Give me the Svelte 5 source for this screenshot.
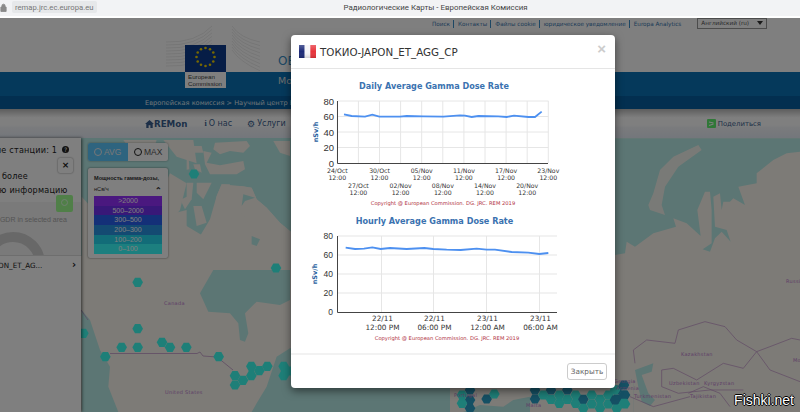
<script lang="ts">
	const daily = [[162,133],[185,138],[225,140],[247,134],[268,140],[330,140],[350,138],[400,139],[460,140],[510,136],[525,137],[545,141],[565,138],[625,139],[650,141],[672,137],[715,141],[735,141],[755,125]];
	const hourly = [[167,128],[195,132],[222,131],[247,127],[272,132],[300,129],[350,132],[403,129],[430,132],[470,134],[512,135],[560,131],[590,134],[615,134],[665,141],[715,143],[748,147],[775,144]];
	const dailyLine = daily.map(([x, y]) => `${290 + x / 3},${70 + y / 3}`).join(' ');
	const hourlyLine = hourly.map(([x, y]) => `${290 + x / 3},${205 + y / 3}`).join(' ');

	const dailyTicks = ['24/Oct','27/Oct','30/Oct','02/Nov','05/Nov','08/Nov','11/Nov','14/Nov','17/Nov','20/Nov','23/Nov'];
	const hourlyTicks = [
		{ x: 381.5, day: '22/11', time: '12:00 PM' },
		{ x: 433.5, day: '22/11', time: '06:00 PM' },
		{ x: 486.5, day: '23/11', time: '12:00 AM' },
		{ x: 539.5, day: '23/11', time: '06:00 AM' }
	];

	const legend = [
		{ label: '>2000', color: '#9430ff' },
		{ label: '500–2000', color: '#7030f0' },
		{ label: '300–500', color: '#2860f0' },
		{ label: '200–300', color: '#2894e4' },
		{ label: '100–200', color: '#24d8f0' },
		{ label: '0–100', color: '#38ffff' }
	];

	const hexNorth = [[194,174],[276,268]];
	const hexCanada = [[413,37],[413,176],[250,190],[365,232],[413,232],[486,217],[510,232],[559,232],[316,260],[656,260],[754,289],[802,289],[778,302],[754,317],[729,331],[705,317],[705,345],[851,289],[851,317],[870,303]];
	const hexEurope = [[516,45,0],[540,30,1],[540,60,1],[516,70,0],[540,85,1],[590,57,1],[613,42,0],[735,30,1],[735,57,1],[760,45,0],[783,30,1],[808,45,0],[832,30,1],[857,45,0],[783,58,0],[808,70,0],[832,58,0],[857,70,0],[880,58,1],[905,45,0],[930,58,0],[955,45,0],[980,30,1],[1005,45,1],[905,72,0],[955,72,0],[1005,72,0],[980,58,1],[880,85,0],[930,85,0],[980,85,0]];
	const hexAsia = [[42,765,1],[15,780,0],[42,795,1],[15,810,1],[42,820,0]];

	const hexes = [
		...hexNorth.map(([x, y]) => ({ x, y, blue: false })),
		...hexCanada.map(([x, y]) => ({ x: x / 3, y: 270 + y / 3, blue: false })),
		...hexEurope.map(([x, y, b]) => ({ x: 290 + x / 3, y: 380 + y / 3, blue: !!b })),
		...hexAsia.map(([x, y, b]) => ({ x: 610 + x / 3, y: 130 + y / 3, blue: !!b }))
	];

	const stars = Array.from({ length: 12 }, (_, i) => {
		const a = (i * Math.PI) / 6;
		return { x: 205.5 + 9 * Math.sin(a), y: 57 - 9 * Math.cos(a) };
	});
</script>

<div class="chrome">
	<svg class="lock" viewBox="0 0 8 10" width="7" height="9"><path d="M1 4.500h6v5H1zM2.200 4.500V3a1.800 1.800 0 0 1 3.600 0v1.500" fill="#8a8a8a" stroke="#8a8a8a" /></svg>
	<span class="url">remap.jrc.ec.europa.eu</span>
	<span class="tab-title">Радиологические Карты - Европейская Комиссия</span>
</div>

<div class="page">
	<div class="top-links">
		<a href="#a">Поиск</a>
		<a href="#a">Контакты</a>
		<a href="#a">Файлы cookie</a>
		<a href="#a">юридическое уведомление</a>
		<a class="last" href="#a">Europa Analytics</a>
		<div class="lang">Английский (ru)<i></i></div>
	</div>

	<div class="hero">
		<div class="hero-title">ОБ</div>
		<div class="hero-band"><span>Мо</span></div>
		<div class="crumbs">Европейская комиссия &gt; Научный центр ЕС</div>
	</div>

	<svg class="logo" viewBox="160 20 100 75" width="100" height="75">
		<g fill="none" stroke="#e4e4e4" stroke-width="0.7">
			{#each [0, 3, 6, 9, 12, 15, 18, 21, 24] as d}
				<path d="M166 {42 + d}q30 1 46 -{16 - d * 0.15}" />
				<path d="M232 {26 + d}q8 12 28 {16 + d * 0.2}" />
			{/each}
		</g>
		<rect x="185" y="45" width="41" height="27" fill="#0c3a8c" />
		{#each stars as s}
			<circle cx={s.x} cy={s.y} r="1.300" fill="#f0d000" />
		{/each}
		<rect x="185" y="72" width="41" height="16" fill="#fff" />
		<text x="188" y="79" class="logo-text">European</text>
		<text x="188" y="85.500" class="logo-text">Commission</text>
	</svg>

	<nav class="nav-bar">
		<a class="brand" href="#a">
			<svg viewBox="0 0 10 9" width="9" height="8"><path d="M5 0 10 4.500H8.600V9H6V6H4v3H1.400V4.500H0z" fill="#3a5f90" /></svg>
			REMon
		</a>
		<a href="#a"><b class="info">i</b> О нас</a>
		<a href="#a"><span class="gear">⚙</span> Услуги</a>
		<a class="share" href="#a">
			<svg viewBox="0 0 9 9" width="9" height="9">
				<rect width="9" height="9" rx="1" fill="#60f070" />
				<path d="M2 6.500 6.500 5M2 3 6.500 4" stroke="#fff" stroke-width="1.200" />
			</svg>
			Поделиться
		</a>
	</nav>

	<div class="map-area">
		<svg class="map" viewBox="0 138 800 274" aria-label="Map">
			<rect x="0" y="138" width="800" height="274" fill="#faf6ee" />
			<g transform="translate(180 136) scale(.3333)">
				<path d="M-300 0H340V330L336 290 300 260 260 215 230 190 215 155 180 150 125 145 110 180 90 250 60 300 20 350-300 360z" fill="#b8ece8" />
				<g fill="#faf6ee">
					<path d="M105 20 200 15 210 30 190 50 150 45 120 55 100 40z" />
					<path d="M80 80 120 88 190 75 195 100 170 115 90 115 75 85 70 45 95 50z" />
					<path d="M0 40 25 45 28 100 0 105z" />
					<path d="M35 30 65 30 70 50 40 50z" />
					<path d="M40 85 60 85 65 110 45 100z" />
					<path d="M0 140 40 140 35 190 15 220 0 190z" />
					<path d="M50 140 95 140 70 190 50 170z" />
					<path d="M40 210 65 210 80 260 50 270z" />
					<path d="M280 15 330 15 330 60 300 50z" />
					<path d="M0 250 20 270 70 300 90 330 70 360 0 360z" />
					<path d="M125 145 150 145 135 190 150 245 200 260 215 300 190 330 160 360 130 320 120 300 95 270 100 240 110 180z" />
					<path d="M150 160 185 150 215 155 230 190 260 215 300 260 336 290 336 360 200 360 220 290 200 250 175 220 165 190z" />
				</g>
				<path d="M190 175 225 185 195 195 185 210z" fill="#b8ece8" />
				<path d="M215 300 240 310 230 330 215 325z" fill="#b8ece8" />
			</g>
			<g transform="translate(0 130) scale(.3333)">
				<path d="M245 30H560V200L530 215 540 290 500 310 440 270 380 300 300 270 245 290z" fill="#b8ece8" />
				<g fill="#faf6ee">
					<path d="M370 30 470 30 460 60 400 70z" />
					<path d="M490 30 580 30 590 100 530 80z" />
					<path d="M510 130 560 160 540 240 500 290 470 220z" />
					<path d="M245 200 420 390 245 390z" />
					<path d="M400 280 560 240 560 400 400 400z" />
				</g>
			</g>
			<g transform="translate(0 270) scale(.3333)" fill="#b8ece8">
				<path d="M640 0 600 70 625 125 690 130 715 160 720 210 735 215 745 190 735 130 770 95 840 105 870 90V0z" />
				<path d="M870 235 830 260 820 290 800 350 770 400 755 426H1300V235z" />
				<path d="M245 120 270 150 300 240 330 290 325 350 355 426H245z" />
			</g>
			<g transform="translate(290 380) scale(.3333)">
				<path d="M560 0H1030V100H0V0z" fill="#b8ece8" />
				<path d="M480 20H720V50L670 60 640 80 570 75 510 100H480z" fill="#faf6ee" />
				<path d="M720 0H1030V100H720z" fill="#faf6ee" />
			</g>
			<g transform="translate(610 130) scale(.3333)">
				<path d="M15 25H570V65L530 70 490 90 440 130 440 160 385 170 405 225 370 205 360 215 340 215 335 240 330 190 310 200 315 290 350 300 362 335 335 305 315 325 300 365 278 358 305 340 305 240 300 185 285 185 262 240 272 318 230 280 190 265 198 290 130 310 75 350 50 335 45 370 15 375z" fill="#b8ece8" />
				<path d="M265 45 275 60 205 110 165 170 155 225 165 255 120 240 115 225 130 190 150 120 190 80z" fill="#faf6ee" opacity=".9" />
				<path d="M75 720 130 700 125 725 95 735 115 790 135 810 120 828 95 815 85 770z" fill="#b8ece8" />
				<g fill="none" stroke="#c090c8" stroke-width="2">
					<path d="M70 660 110 630 195 640 205 600 285 575 345 590 380 630 440 665 400 715 340 700 260 750 190 715 155 720 155 770 205 790 300 780 400 780" />
					<path d="M440 665 480 650 545 625 570 630M440 665 480 720 570 755" />
					<path d="M70 660 75 700M235 790 280 770 330 790 360 830M60 800 130 830 240 800" />
				</g>
			</g>
			<path d="M110 353.500H197L200 352 203 356 217 357 233 370" fill="none" stroke="#c098c8" stroke-width=".8" />
			<path d="M81 310 88 320" fill="none" stroke="#c098c8" stroke-width=".8" />
			{#each hexes as h}
				<polygon
					transform="translate({h.x} {h.y})"
					points="-5.300,0 -2.650,-4.600 2.650,-4.600 5.300,0 2.650,4.600 -2.650,4.600"
					fill={h.blue ? '#2aa0c8' : '#3cfff0'}
				/>
			{/each}
			<g class="labels">
				<text x="164" y="305">Canada</text>
				<text x="165" y="394">United States</text>
				<text x="786" y="283">Russia</text>
				<text x="681" y="356">Kazakhstan</text>
				<text x="669" y="385">Uzbekistan</text>
				<text x="704" y="385">Kyrgyzstan</text>
				<text x="634" y="398">Turkmenistan</text>
				<text x="690" y="398">Tajikistan</text>
				<text x="793" y="362">Mo</text>
				<text x="614" y="383">Georgia</text>
				<text x="616" y="390">Armenia</text>
				<text x="454" y="397">Portugal</text>
				<text x="526" y="407">Malta</text>
			</g>
		</svg>

		<aside class="side">
			<div class="side-head">Выбранные станции: 1 <span class="help">?</span></div>
			<div class="side-close"><span>×</span></div>
			<p class="side-text">Получить более<br />подробную информацию</p>
			<div class="side-gray">
				<div class="side-note">Average GDR in selected area</div>
				<div class="donut"></div>
			</div>
			<span class="side-go"><i></i></span>
			<div class="station">ТОКИО-JAPON_ET_AG...<b>›</b></div>
		</aside>

		<div class="toggle">
			<span class="on"><i class="check"></i>AVG</span>
			<span><i class="ring"></i>MAX</span>
		</div>

		<div class="legend">
			<div class="legend-title">Мощность гамма-дозы,</div>
			<div class="legend-unit">нСв/ч <b>⌃</b></div>
			{#each legend as row}
				<div class="legend-row" style="background: {row.color}">{row.label}</div>
			{/each}
		</div>
	</div>

	<div class="backdrop"></div>

	<section class="modal">
		<header class="modal-head">
			<svg class="flag" viewBox="0 0 17 13" width="17" height="13">
				<defs>
					<linearGradient id="fl" x1="0" y1="0" x2="0" y2="1">
						<stop offset="0" stop-color="#fff" stop-opacity=".25" />
						<stop offset=".5" stop-color="#fff" stop-opacity="0" />
						<stop offset="1" stop-color="#000" stop-opacity=".15" />
					</linearGradient>
				</defs>
				<rect width="5.700" height="13" fill="#1c2a78" />
				<rect x="5.700" width="5.600" height="13" fill="#f4f4f8" />
				<rect x="11.300" width="5.700" height="13" fill="#e8343c" />
				<rect width="17" height="13" fill="url(#fl)" />
			</svg>
			<h2>ТОКИО-JAPON_ET_AGG_CP</h2>
			<span class="close">×</span>
		</header>

		<div class="modal-body">
			<svg class="chart" viewBox="291 78 324 128" width="324" height="128">
				<text class="chart-title" x="434" y="89">Daily Average Gamma Dose Rate</text>
				{#each [0, 1, 2, 3] as i}
					<line x1="338" x2="548.500" y1={101 + i * 15.5} y2={101 + i * 15.5} class="grid" />
				{/each}
				{#each dailyTicks as t, i}
					<line x1={337.3 + i * 21.1} x2={337.3 + i * 21.1} y1="101" y2="163" class="grid" />
					<text class="tick-sm" x={337.3 + i * 21.1} y={i % 2 ? 188 : 173}>{t}</text>
					<text class="tick-sm" x={337.3 + i * 21.1} y={i % 2 ? 195 : 180}>12:00</text>
				{/each}
				<path d="M337.500 101V163.500H548" class="axis" />
				{#each [80, 60, 40, 20, 0] as v, i}
					<text class="tick-y" x="334" y={104.500 + i * 15.5}>{v}</text>
				{/each}
				<text class="y-title" transform="translate(317.500 132) rotate(-90)">nSv/h</text>
				<polyline points={dailyLine} class="series" />
				<text class="copyright" x="443" y="205">Copyright @ European Commission. DG. JRC. REM 2019</text>
			</svg>

			<svg class="chart" viewBox="291 210 324 132" width="324" height="132">
				<text class="chart-title big" x="434.500" y="224">Hourly Average Gamma Dose Rate</text>
				{#each [0, 1, 2, 3] as i}
					<line x1="338" x2="557" y1={236 + i * 19} y2={236 + i * 19} class="grid thick" />
				{/each}
				{#each hourlyTicks as t}
					<line x1={t.x} x2={t.x} y1="236" y2="312" class="grid" />
					<text class="tick-md" x={t.x + 1} y="321">{t.day}</text>
					<text class="tick-md" x={t.x + 1} y="330">{t.time}</text>
				{/each}
				<path d="M337.500 236V312.500H557" class="axis" />
				{#each [80, 60, 40, 20, 0] as v, i}
					<text class="tick-y small" x="333" y={239 + i * 19}>{v}</text>
				{/each}
				<text class="y-title" transform="translate(316.500 274) rotate(-90)">nSv/h</text>
				<polyline points={hourlyLine} class="series" />
				<text class="copyright" x="447" y="340">Copyright @ European Commission. DG. JRC. REM 2019</text>
			</svg>
		</div>

		<footer class="modal-foot">
			<button type="button">Закрыть</button>
		</footer>
	</section>

	<div class="watermark">Fishki.net</div>
</div>

<style>
	:global(body) {
		margin: 0;
		background: #fff;
		overflow: hidden;
	}

	.chrome {
		display: flex;
		align-items: center;
		height: 16px;
		padding-bottom: 2px;
		background: linear-gradient(#f2f3f5 88%, #fff 88%);
		font-family: Roboto, sans-serif;
	}

	.lock {
		margin: 0 3px 2px 0;
	}

	.url {
		height: 12px;
		margin: -3px 0 0 2px;
		padding: 0 3px;
		background: #e6e8ea;
		border-radius: 2px;
		font-size: 7.700px;
		line-height: 13px;
		color: #777;
	}

	.tab-title {
		margin: -2px 0 0 247px;
		font-size: 7.900px;
		color: #444;
	}

	.page {
		position: relative;
		height: 394px;
		overflow: hidden;
		background: #fff;
		font-family: 'DejaVu Sans', sans-serif;
	}

	.top-links {
		display: flex;
		align-items: center;
		height: 54px;
		padding: 0 0 43px 432px;
		box-sizing: border-box;
		font-size: 5.700px;
	}

	.top-links a {
		padding-right: 3px;
		margin-right: 4px;
		border-right: 1px solid #3a8fc8;
		color: #3a78b0;
		text-decoration: none;
		line-height: 8px;
		white-space: nowrap;
	}

	.top-links a.last {
		border: 0;
		margin-right: 13px;
	}

	.lang {
		position: relative;
		width: 70px;
		height: 11px;
		box-sizing: border-box;
		padding-left: 3px;
		border: 1px solid #999;
		line-height: 9px;
		color: #555;
		white-space: nowrap;
	}

	.lang i {
		position: absolute;
		right: 3px;
		top: 2px;
		border: 3.500px solid transparent;
		border-top: 4px solid #333;
		border-bottom: 0;
	}

	.hero {
		position: relative;
		height: 37px;
		color: #fff;
	}

	.hero-title {
		position: absolute;
		left: 278px;
		top: -18px;
		font-size: 12px;
		color: #3a90c8;
		white-space: nowrap;
	}

	.hero-band {
		height: 24px;
		background: #0a72b6;
		font-size: 9.500px;
		line-height: 18px;
		padding-left: 278px;
		color: #ddd;
	}

	.crumbs {
		height: 13px;
		padding-left: 145px;
		background: #065ea0;
		font-size: 6.600px;
		line-height: 14px;
		color: #dfe8f0;
		white-space: nowrap;
	}

	.logo {
		position: absolute;
		left: 160px;
		top: 2px;
	}

	.logo-text {
		font: 6.200px 'Liberation Sans', sans-serif;
		fill: #444;
	}

	.nav-bar {
		display: flex;
		align-items: center;
		height: 29px;
		padding-left: 145px;
		box-sizing: border-box;
		background: linear-gradient(#bbb, #fff 30%, #fff 55%, #f4f6fa 65%, #e8eef8);
		font-size: 8px;
		color: #3a5f90;
	}

	.nav-bar a {
		display: flex;
		align-items: center;
		gap: 2px;
		margin-right: 15px;
		color: inherit;
		text-decoration: none;
		white-space: nowrap;
	}

	.brand {
		font-size: 8.700px;
		font-weight: bold;
		gap: 0 !important;
		margin-right: 17px !important;
	}

	.info {
		font-family: 'Liberation Serif', serif;
	}

	.gear {
		font-size: 9px;
	}

	.nav-bar .share {
		margin: 0 0 0 auto;
		padding-right: 39px;
		font-size: 6.900px;
	}

	.map-area {
		position: relative;
		height: 274px;
	}

	.map {
		display: block;
		width: 800px;
		height: 274px;
	}

	.labels text {
		font: 5px 'DejaVu Sans', sans-serif;
		letter-spacing: 0.3px;
		fill: #c080d0;
	}

	.side {
		position: absolute;
		left: -139px;
		top: 0;
		width: 220px;
		height: 274px;
		background: #fff;
		box-shadow: 1px 0 3px rgba(0, 0, 0, 0.6);
		color: #222;
		overflow: hidden;
	}

	.side-head {
		padding: 7px 12px 0 0;
		height: 16px;
		font-size: 8.100px;
		letter-spacing: 0.2px;
		text-align: right;
		white-space: nowrap;
	}

	.help {
		display: inline-block;
		width: 7px;
		height: 7px;
		margin-left: 2px;
		border-radius: 50%;
		background: #222;
		color: #fff;
		font-size: 6px;
		line-height: 7px;
		text-align: center;
		vertical-align: 1px;
		letter-spacing: 0;
	}

	.side-close {
		position: absolute;
		left: 197px;
		top: 20px;
		width: 15px;
		height: 15px;
		background: #fff;
		box-shadow: 0 0 2px rgba(0, 0, 0, 0.5);
		border-radius: 2px;
		text-align: center;
		font-size: 9px;
		font-weight: bold;
		line-height: 14px;
	}

	.side-text {
		margin: 9px 0 0 96px;
		font-size: 8.100px;
		line-height: 13.600px;
		letter-spacing: 0.2px;
		white-space: nowrap;
	}

	.side-go {
		position: absolute;
		left: 195px;
		top: 57px;
		width: 17px;
		height: 17px;
		border-radius: 2px;
		background: #a0ff90;
	}

	.side-go i {
		display: block;
		width: 5px;
		height: 5px;
		margin: 4px auto;
		border: 1.500px solid #e0ffe0;
		border-radius: 50%;
	}

	.side-gray {
		position: absolute;
		left: 0;
		right: 0;
		top: 64px;
		height: 53px;
		background: #f4f4f4;
		overflow: hidden;
	}

	.side-note {
		margin: 14px 0 0 111px;
		font-size: 7px;
		color: #aaa;
		font-family: 'Liberation Sans', sans-serif;
		white-space: nowrap;
	}

	.donut {
		position: absolute;
		left: 120px;
		top: 30px;
		width: 64px;
		height: 64px;
		box-sizing: border-box;
		border: 10px solid #d0d0d0;
		border-radius: 50%;
	}

	.station {
		position: absolute;
		left: 0;
		right: 0;
		top: 117px;
		height: 20px;
		padding-left: 97px;
		background: #fff;
		border-top: 1px solid #ddd;
		box-sizing: border-box;
		font-size: 7.200px;
		line-height: 19px;
		white-space: nowrap;
	}

	.station b {
		position: absolute;
		left: 211px;
		top: -1px;
		font-size: 10px;
	}

	.toggle {
		position: absolute;
		left: 88px;
		top: 5px;
		display: flex;
		height: 18px;
		font-size: 8.500px;
		line-height: 18px;
		color: #555;
		font-family: 'Liberation Sans', sans-serif;
		box-shadow: 0 0 2px rgba(0, 0, 0, 0.4);
		border-radius: 2px;
		background: #fff;
	}

	.toggle span {
		display: flex;
		align-items: center;
		gap: 2px;
		width: 40px;
		padding-left: 6px;
		box-sizing: border-box;
	}

	.toggle .on {
		background: #5cc8ff;
		color: #eee;
		border-radius: 2px 0 0 2px;
	}

	.check,
	.ring {
		display: block;
		width: 6px;
		height: 6px;
		border: 1.500px solid #eee;
		border-radius: 50%;
	}

	.ring {
		border-color: #222;
	}

	.legend {
		position: absolute;
		left: 88px;
		top: 30px;
		width: 80px;
		height: 90px;
		padding: 6px 6px 0;
		box-sizing: border-box;
		background: #fff;
		border-radius: 2px;
		box-shadow: 0 0 2px rgba(0, 0, 0, 0.6);
		font-family: 'Liberation Sans', sans-serif;
	}

	.legend-title {
		font-size: 5.600px;
		font-weight: bold;
		color: #333;
		white-space: nowrap;
		line-height: 8px;
	}

	.legend-unit {
		display: flex;
		justify-content: space-between;
		height: 11px;
		margin-top: 2px;
		margin-bottom: 1px;
		font-size: 5.600px;
		line-height: 11px;
		color: #333;
	}

	.legend-unit b {
		font-size: 8px;
		line-height: 14px;
	}

	.legend-row {
		height: 9.700px;
		font-size: 7px;
		line-height: 9.700px;
		text-align: center;
		color: #fff;
	}

	.backdrop {
		position: absolute;
		inset: 0;
		background: rgba(0, 0, 0, 0.5);
	}

	.modal {
		position: absolute;
		left: 291px;
		top: 17px;
		width: 324px;
		height: 353px;
		background: #fff;
		border-radius: 4px;
		box-shadow: 0 3px 9px rgba(0, 0, 0, 0.5);
		display: flex;
		flex-direction: column;
	}

	.modal-head {
		display: flex;
		align-items: center;
		gap: 4px;
		height: 34px;
		box-sizing: border-box;
		padding: 0 8px;
		border-bottom: 1px solid #e5e5e5;
		flex-shrink: 0;
	}

	.modal-head h2 {
		margin: 0;
		font-size: 10.300px;
		font-weight: normal;
		color: #333;
		white-space: nowrap;
	}

	.close {
		margin: -6px 0 0 auto;
		font-size: 15px;
		font-weight: bold;
		color: #ccc;
		font-family: 'Liberation Sans', sans-serif;
		padding-right: 1px;
	}

	.modal-body {
		flex: 1;
		padding-top: 9px;
		display: flex;
		flex-direction: column;
		gap: 4px;
		overflow: hidden;
	}

	.chart {
		display: block;
		flex-shrink: 0;
	}

	.chart-title {
		font: bold 8.100px 'DejaVu Sans', sans-serif;
		fill: #3a72b0;
		text-anchor: middle;
	}

	.chart-title.big {
		font-size: 8.150px;
	}

	.grid {
		stroke: #e6e6e6;
		stroke-width: 1;
	}

	.grid.thick {
		stroke: #eee;
		stroke-width: 1.500;
	}

	.axis {
		fill: none;
		stroke: #444;
		stroke-width: 1;
	}

	.tick-y {
		font: 9.500px 'Liberation Sans', sans-serif;
		fill: #333;
		text-anchor: end;
	}

	.tick-y.small {
		font-size: 8.500px;
	}

	.tick-sm {
		font: 6.200px 'DejaVu Sans', sans-serif;
		fill: #333;
		text-anchor: middle;
	}

	.tick-md {
		font: 7.300px 'DejaVu Sans', sans-serif;
		fill: #333;
		text-anchor: middle;
	}

	.y-title {
		font: bold 6.500px 'DejaVu Sans', sans-serif;
		fill: #2a5f9e;
		text-anchor: middle;
	}

	.series {
		fill: none;
		stroke: #4d90f0;
		stroke-width: 1.800;
	}

	.copyright {
		font: 5.200px 'DejaVu Sans', sans-serif;
		fill: #b03040;
		text-anchor: middle;
	}

	.modal-foot {
		display: flex;
		justify-content: flex-end;
		align-items: center;
		height: 33px;
		padding-right: 8px;
		border-top: 2px solid #f2f2f2;
		flex-shrink: 0;
	}

	.modal-foot button {
		width: 40px;
		height: 17px;
		padding: 0;
		background: #fff;
		border: 1px solid #ccc;
		border-radius: 3px;
		font: 7.300px 'DejaVu Sans', sans-serif;
		color: #666;
	}

	.watermark {
		position: absolute;
		right: 6px;
		bottom: 4px;
		font: 14px 'Liberation Sans', sans-serif;
		color: #fff;
		text-shadow: -1px 0 #000, 1px 0 #000, 0 -1px #000, 0 1px #000;
	}
</style>
